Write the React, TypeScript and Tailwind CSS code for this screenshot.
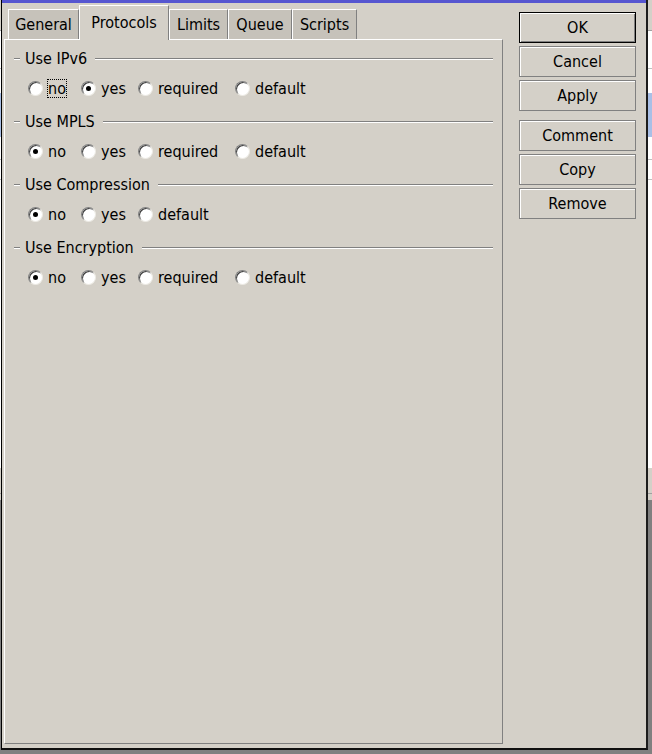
import React from 'react';

const font = "font-['DejaVu_Sans_Condensed','DejaVu_Sans',sans-serif]";

const groups = [
  { title: 'Use IPv6', options: ['no', 'yes', 'required', 'default'], checked: 1, focus: 0 },
  { title: 'Use MPLS', options: ['no', 'yes', 'required', 'default'], checked: 0, focus: -1 },
  { title: 'Use Compression', options: ['no', 'yes', 'default'], checked: 0, focus: -1 },
  { title: 'Use Encryption', options: ['no', 'yes', 'required', 'default'], checked: 0, focus: -1 },
];

const optionWidth: Record<string, string> = {
  no: 'w-[53px]',
  yes: 'w-[57px]',
  required: 'w-[97px]',
  default: '',
};

const tabs = [
  { label: 'General', w: 'w-[71px]' },
  { label: 'Protocols', w: 'w-[90px]', active: true },
  { label: 'Limits', w: 'w-[59px]' },
  { label: 'Queue', w: 'w-[64px]' },
  { label: 'Scripts', w: 'w-[65px]' },
];

const Radio = ({ checked }: { checked: boolean }) => (
  <span className="w-[15px] h-[15px] shrink-0 rounded-full bg-white border border-t-[#808080] border-l-[#808080] border-r-[#eceae4] border-b-[#eceae4] shadow-[inset_1px_1px_0_#404040] flex items-center justify-center">
    {checked && <span className="w-[5px] h-[5px] rounded-full bg-black" />}
  </span>
);

// background windows peeking out at the edges
const EdgeStrip = ({ w }: { w: string }) => (
  <div className={`${w} h-[750px] flex flex-col bg-white`}>
    <div className="h-[30px] bg-[#d4d0c8]" />
    <div className="h-[1px] bg-[#a0a0a0]" />
    <div className="h-[37px]" />
    <div className="h-[1px] bg-[#c0c0c0]" />
    <div className="h-[24px]" />
    <div className="h-[44px] bg-[#a9bfe6]" />
    <div className="h-[22px]" />
    <div className="h-[1px] bg-[#c0c0c0]" />
    <div className="h-[19px]" />
    <div className="h-[1px] bg-[#c0c0c0]" />
    <div className="flex-1" />
    <div className="h-[25px] bg-[#d4d0c8]" />
    <div className="h-[1px] bg-[#a0a0a0]" />
    <div className="h-[6px] bg-[#d4d0c8]" />
    <div className="h-[250px] bg-[#808080]" />
  </div>
);

const Btn = ({ label, primary }: { label: string; primary?: boolean }) => (
  <div
    className={`h-[31px] w-[117px] flex items-center justify-center text-[16px] text-black bg-[#d4d0c8] border ${
      primary
        ? 'border-black shadow-[inset_1px_1px_0_#fff,inset_-1px_-1px_0_#808080]'
        : 'border-[#808080] shadow-[inset_1px_1px_0_#fff]'
    }`}
  >
    {label}
  </div>
);

export default function App() {
  return (
    <div className={`w-[652px] h-[754px] bg-[#808080] flex overflow-hidden ${font}`}>
      <EdgeStrip w="w-[1px]" />

      {/* dialog window */}
      <div className="w-[647px] h-[750px] flex flex-col bg-[#d4d0c8] border-l border-l-black border-r-2 border-r-[#1c1c1c] border-b-2 border-b-[#101010]">
        <div className="h-[3px] bg-[#5656d0] shrink-0" />

        <div className="flex-1 flex pl-[2px] pb-[4px] min-h-0">
          {/* tabs + panel */}
          <div className="w-[499px] flex flex-col">
            <div className="h-[36px] pt-[2px] pl-[4px] flex items-end shrink-0">
              {tabs.map((t) =>
                t.active ? (
                  <div
                    key={t.label}
                    className={`${t.w} h-[35px] -mb-[1px] relative z-10 bg-[#d4d0c8] border-t border-l border-t-white border-l-white border-r border-r-[#808080] flex justify-center pt-[5px] text-[16px] text-black`}
                  >
                    {t.label}
                  </div>
                ) : (
                  <div
                    key={t.label}
                    className={`${t.w} h-[30px] bg-[#c6c2ba] border-t border-l border-t-white border-l-white border-r border-r-[#808080] flex justify-center pt-[3px] text-[16px] text-black`}
                  >
                    {t.label}
                  </div>
                )
              )}
            </div>

            <div className="flex-1 bg-[#d4d0c8] border-t border-l border-t-white border-l-white border-r border-b border-r-[#808080] border-b-[#808080] pt-[9px]">
              {groups.map((g) => (
                <div key={g.title} className="mb-[14px]">
                  <div className="h-[19px] flex items-center pl-[9px] pr-[9px]">
                    <div className="w-[6px] h-[2px] border-t border-t-[#808080] border-b border-b-white" />
                    <span className="ml-[5px] mr-[8px] text-[16px] leading-[19px] text-black">{g.title}</span>
                    <div className="flex-1 h-[2px] border-t border-t-[#808080] border-b border-b-white" />
                  </div>
                  <div className="h-[19px] mt-[11px] flex items-center pl-[23px]">
                    {g.options.map((o, i) => (
                      <div key={o} className={`${optionWidth[o]} flex items-center gap-[5px]`}>
                        <Radio checked={i === g.checked} />
                        <span
                          className={`text-[16px] leading-[17px] text-black ${
                            i === g.focus ? 'outline outline-1 outline-dotted outline-black' : ''
                          }`}
                        >
                          {o}
                        </span>
                      </div>
                    ))}
                  </div>
                </div>
              ))}
            </div>
          </div>

          {/* buttons */}
          <div className="ml-[16px] mt-[9px] flex flex-col gap-[3px]">
            <Btn label="OK" primary />
            <Btn label="Cancel" />
            <Btn label="Apply" />
            <div className="mt-[6px]">
              <Btn label="Comment" />
            </div>
            <Btn label="Copy" />
            <Btn label="Remove" />
          </div>
        </div>
      </div>

      <EdgeStrip w="w-[4px]" />
    </div>
  );
}
